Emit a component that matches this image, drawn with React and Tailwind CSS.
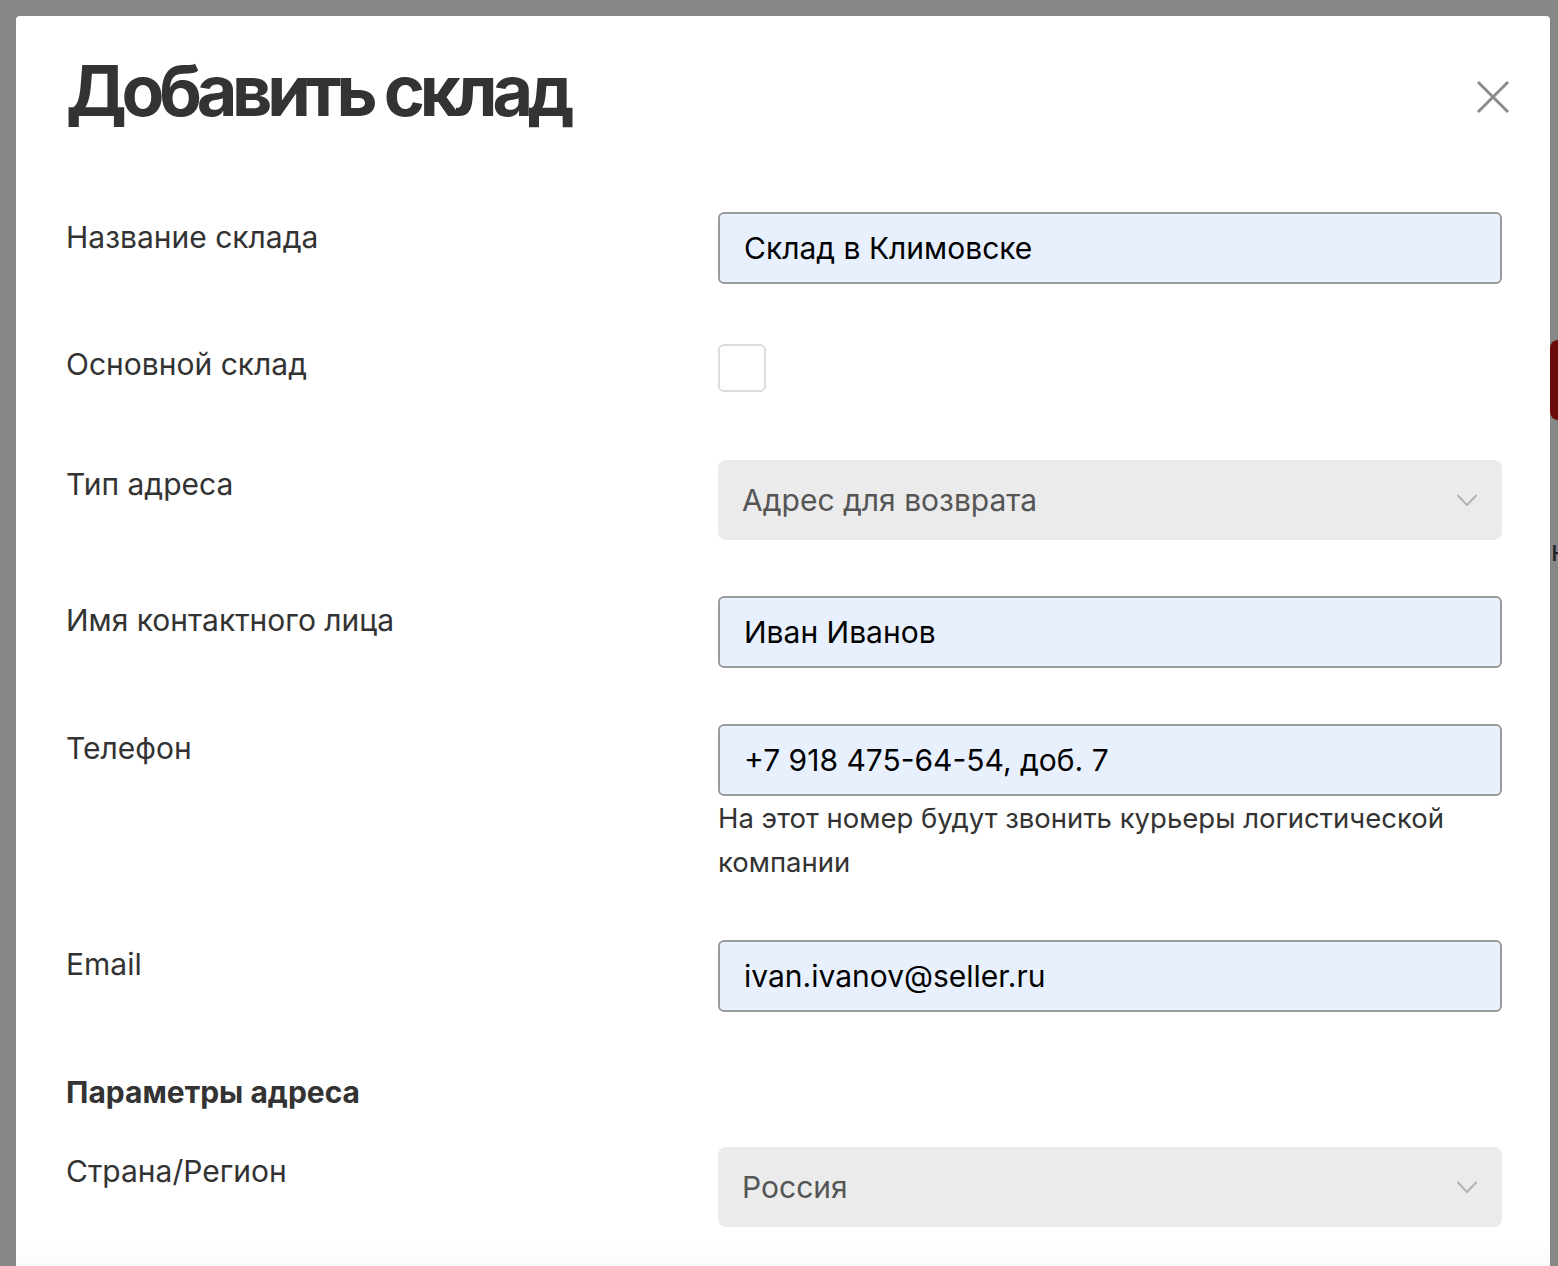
import React from "react";

function ChevronDown() {
  return (
    <svg width="22" height="14" viewBox="0 0 22 14" fill="none" className="shrink-0">
      <path d="M1.5 2 L11 12 L20.5 2" stroke="#b3b3b3" strokeWidth="2" />
    </svg>
  );
}

function CloseIcon() {
  return (
    <svg width="34" height="34" viewBox="0 0 34 34" fill="none">
      <path d="M2 2 L32 32 M32 2 L2 32" stroke="#8c8c8c" strokeWidth="3" />
    </svg>
  );
}

function Row({ label, top, children, labelPad = "pt-[7px]" }) {
  return (
    <div className={`grid grid-cols-[652px_784px] ${top}`}>
      <div className={`${labelPad} text-[30px] leading-[34px] text-[#333]`}>{label}</div>
      <div>{children}</div>
    </div>
  );
}

function TextField({ value }) {
  return (
    <div className="h-[72px] rounded-[6px] border-2 border-[#9a9a9a] bg-[#e8f0fe] px-[24px] flex items-center text-[30px] text-black">
      {value}
    </div>
  );
}

function SelectField({ value }) {
  return (
    <div className="h-[80px] rounded-[8px] bg-[#ebebeb] pl-[24px] pr-[24px] flex items-center justify-between text-[30px] text-[#555]">
      <span>{value}</span>
      <ChevronDown />
    </div>
  );
}

export default function App() {
  return (
    <div
      className="relative h-[1266px] overflow-hidden bg-[#878787]"
      style={{ fontFamily: "Inter, 'Liberation Sans', sans-serif" }}
    >
      {/* page behind the overlay */}
      <div className="absolute right-[-12px] top-[340px] h-[80px] w-[20px] rounded-[8px] bg-[#6b0a0a]" />
      <div className="absolute left-[1551px] top-[530px] w-[7px] overflow-hidden text-[28px] text-[#222]">н</div>

      <div className="relative ml-[16px] mt-[16px] w-[1534px] h-[1300px] rounded-t-[4px] bg-white pl-[50px] pr-[48px] pt-[40px]">
        <div className="flex items-start justify-between">
          <h1 className="text-[70px] leading-[70px] font-bold tracking-[-0.075em] text-[#333]">Добавить склад</h1>
          <button className="mt-[24px] mr-[-8px]">
            <CloseIcon />
          </button>
        </div>

        <Row label="Название склада" top="mt-[86px]" labelPad="pt-[8px]">
          <TextField value="Склад в Климовске" />
        </Row>

        <Row label="Основной склад" top="mt-[60px]" labelPad="pt-[3px]">
          <div className="h-[48px] w-[48px] rounded-[6px] border-2 border-[#dcdcdc] bg-white" />
        </Row>

        <Row label="Тип адреса" top="mt-[68px]">
          <SelectField value="Адрес для возврата" />
        </Row>

        <Row label="Имя контактного лица" top="mt-[56px]">
          <TextField value="Иван Иванов" />
        </Row>

        <Row label="Телефон" top="mt-[56px]">
          <TextField value="+7 918 475-64-54, доб. 7" />
          <p className="text-[27.5px] leading-[44px] text-[#333] pr-[40px]">
            На этот номер будут звонить курьеры логистической компании
          </p>
        </Row>

        <Row label="Email" top="mt-[56px]">
          <TextField value="ivan.ivanov@seller.ru" />
        </Row>

        <h2 className="mt-[63px] text-[30px] leading-[34px] font-bold text-[#333]">Параметры адреса</h2>

        <Row label="Страна/Регион" top="mt-[38px]">
          <SelectField value="Россия" />
        </Row>

        <div className="absolute left-0 right-0 top-[1226px] h-[40px] bg-gradient-to-b from-white to-[#f6f6f6]" />
      </div>
    </div>
  );
}
